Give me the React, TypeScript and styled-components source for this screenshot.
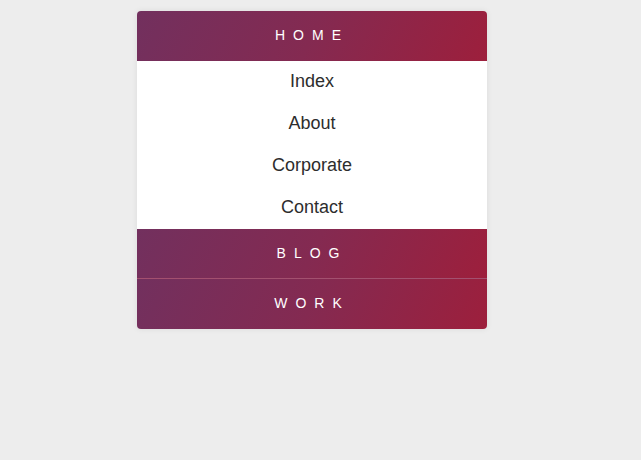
import styled, { createGlobalStyle } from 'styled-components'

const GlobalStyle = createGlobalStyle`
  html, body {
    margin: 0;
    padding: 0;
    background: #ededed;
    font-family: 'Liberation Sans', Arial, sans-serif;
  }
`

const sections = [
  { title: 'HOME', links: ['Index', 'About', 'Corporate', 'Contact'] },
  { title: 'BLOG', links: [] },
  { title: 'WORK', links: [] },
]

export default function App() {
  return (
    <Page>
      <GlobalStyle />
      <Menu>
        {sections.map((s, i) => (
          <Section key={s.title}>
            <Header $divider={i > 0 && sections[i - 1].links.length === 0}>
              {s.title}
            </Header>
            {s.links.length > 0 && (
              <LinkList>
                {s.links.map((l) => (
                  <LinkItem key={l} href="#">
                    {l}
                  </LinkItem>
                ))}
              </LinkList>
            )}
          </Section>
        ))}
      </Menu>
    </Page>
  )
}

const Page = styled.div`
  width: 641px;
  height: 460px;
  padding: 11px 0 0 137px;
  box-sizing: border-box;
`

const Menu = styled.div`
  width: 350px;
  border-radius: 4px;
  overflow: hidden;
  box-shadow: 0 0 6px rgba(0, 0, 0, 0.08);
`

const Section = styled.div`
  display: flex;
  flex-direction: column;
`

const Header = styled.div<{ $divider?: boolean }>`
  height: 50px;
  display: flex;
  align-items: center;
  justify-content: center;
  box-sizing: border-box;
  background: linear-gradient(115deg, #72305e 0%, #842a51 50%, #9d1f3c 100%);
  color: #fff;
  font-size: 14px;
  letter-spacing: 8px;
  padding-bottom: 3px;
  border-top: ${(p) => (p.$divider ? '1px solid #a3506f' : 'none')};
  margin-top: ${(p) => (p.$divider ? '-1px' : '0')};
  height: ${(p) => (p.$divider ? '51px' : '50px')};
`

const LinkList = styled.div`
  background: #fff;
  display: flex;
  flex-direction: column;
`

const LinkItem = styled.a`
  height: 42px;
  display: flex;
  align-items: center;
  justify-content: center;
  padding-bottom: 2px;
  box-sizing: border-box;
  color: #2d2d2d;
  font-size: 18px;
  text-decoration: none;
`
